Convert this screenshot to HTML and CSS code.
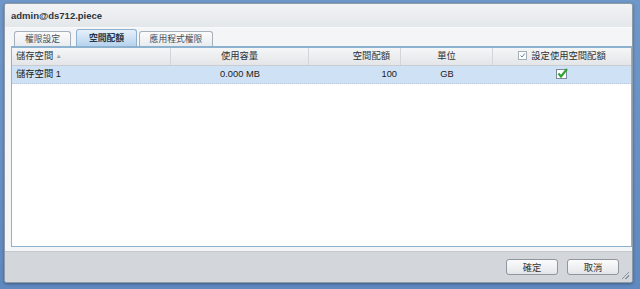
FILE: index.html
```html
<!DOCTYPE html>
<html lang="zh-Hant">
<head>
  <meta charset="UTF-8">
  <title>admin@ds712.piece</title>
  <link rel="stylesheet" href="styles.css">
</head>
<body>
  <div class="window">
    <div class="titlebar">admin@ds712.piece</div>
    <div class="content">
      <div class="tabs">
        <div class="tab t1">權限設定</div>
        <div class="tab t2 active">空間配額</div>
        <div class="tab t3">應用程式權限</div>
      </div>
      <div class="grid">
        <div class="row head">
          <div class="col c1 left">儲存空間 <span class="sort">▲</span></div>
          <div class="col c2 center">使用容量</div>
          <div class="col c3 right">空間配額</div>
          <div class="col c4 center">單位</div>
          <div class="col c5 center">
            <svg class="mini-check" width="9" height="9" viewBox="0 0 9 9">
              <rect x="0.5" y="0.5" width="8" height="8" fill="#fff" stroke="#a3adb8"/>
              <path d="M2.5 4.5 L4 6 L6.8 2.5" fill="none" stroke="#6a7f96" stroke-width="1"/>
            </svg>設定使用空間配額
          </div>
        </div>
        <div class="row data">
          <div class="col c1 left">儲存空間 1</div>
          <div class="col c2 center">0.000 MB</div>
          <div class="col c3 right">100</div>
          <div class="col c4 center">GB</div>
          <div class="col c5 center">
            <svg class="check" width="12" height="11" viewBox="0 0 12 11">
              <rect x="0.5" y="1.5" width="10" height="9" fill="#fff" stroke="#7a8a9a"/>
              <path d="M2.5 5.5 L5 8.5 L11 1" fill="none" stroke="#2fa52f" stroke-width="2.2"/>
            </svg>
          </div>
        </div>
      </div>
    </div>
    <div class="footer">
      <button class="btn">確定</button>
      <button class="btn">取消</button>
      <span class="grip"></span>
    </div>
  </div>
</body>
</html>
```

FILE: styles.css
```css
body {
    margin: 0;
    height: 289px;
    background: linear-gradient(#6f97c9, #5f89bf);
    font-family: "Liberation Sans", "Noto Sans CJK TC", sans-serif;
    font-size: 9.3px;
    color: #222;
    overflow: hidden;
}
.window {
    margin: 3px 0 0 4px;
    width: 627px;
    height: 278px;
    border: 1px solid #8e9aa8;
    border-radius: 3px;
    background: #f4f5f7;
    display: flex;
    flex-direction: column;
    overflow: hidden;
    position: relative;
    box-shadow: 0 1px 3px rgba(0, 0, 0, 0.35);
}
.titlebar {
    height: 23px;
    padding-left: 6px;
    line-height: 23px;
    font-weight: bold;
    font-size: 9.5px;
    color: #2d3540;
    background: linear-gradient(#f2f3f5, #e4e7ea);
    border-bottom: 1px solid #f8f9fa;
}
.content {
    flex: 1;
    padding: 1px 0 4px 6px;
    display: flex;
    flex-direction: column;
}
.tabs {
    display: flex;
    align-items: flex-end;
    padding-left: 3px;
    height: 17px;
}
.tab {
    box-sizing: border-box;
    height: 15px;
    line-height: 14px;
    border: 1px solid #a7b0ba;
    border-bottom: none;
    border-radius: 3px 3px 0 0;
    background: linear-gradient(#fbfbfc, #e9ecef);
    color: #4a4f55;
    font-size: 8.8px;
    text-align: center;
}
.t1 { width: 57px; }
.t2 { width: 61px; margin-left: 5px; }
.t3 { width: 74px; margin-left: 2px; }
.tab.active {
    height: 17px;
    line-height: 16px;
    font-weight: bold;
    color: #243447;
    border-color: #8fb1cf;
    background: linear-gradient(#e6f0fa, #b7d3ee);
}
.grid {
    flex: 1;
    border: 1px solid #8cb2d0;
    border-top: 2px solid #8cb2d0;
    background: #fff;
}
.row {
    display: flex;
    height: 17px;
    line-height: 17px;
}
.row.head {
    background: linear-gradient(#f5f6f7, #e3e5e8);
    border-bottom: 1px solid #c9cdd2;
    color: #2e3339;
}
.row.data {
    background: #cfe1f4;
    border-bottom: 1px dotted #b5c8dc;
}
.col {
    box-sizing: border-box;
    padding: 0 4px;
    white-space: nowrap;
}
.row.head .col { border-right: 1px solid #d2d5d9; }
.row.head .col:last-child { border-right: none; }
.c1 { width: 159px; }
.c2 { width: 138px; }
.c3 { width: 92px; padding-right: 10px; }
.c4 { width: 92px; }
.c5 { flex: 1; }
.left { text-align: left; }
.center { text-align: center; }
.right { text-align: right; }
.row.data .c3 { padding-right: 4px; }
.sort {
    font-size: 6px;
    color: #9aa1a9;
    vertical-align: 1px;
}
.mini-check {
    margin-right: 4px;
    vertical-align: -1px;
}
.check { vertical-align: -2px; }
.footer {
    height: 30px;
    background: #d3d7dc;
    border-top: 1px solid #c3c8ce;
    display: flex;
    justify-content: flex-end;
    align-items: center;
    gap: 9px;
    padding-right: 13px;
}
.btn {
    width: 52px;
    height: 16px;
    padding: 0;
    border: 1px solid #8f969e;
    border-radius: 3px;
    background: linear-gradient(#fbfbfc, #e3e6e9);
    font-family: "Liberation Sans", "Noto Sans CJK TC", sans-serif;
    font-size: 9.3px;
    color: #333;
}
.grip {
    position: absolute;
    right: 3px;
    bottom: 3px;
    width: 7px;
    height: 7px;
    background: linear-gradient(135deg, transparent 45%, #8a929b 45%, #8a929b 55%, transparent 55%, transparent 70%, #8a929b 70%, #8a929b 80%, transparent 80%);
}
```
